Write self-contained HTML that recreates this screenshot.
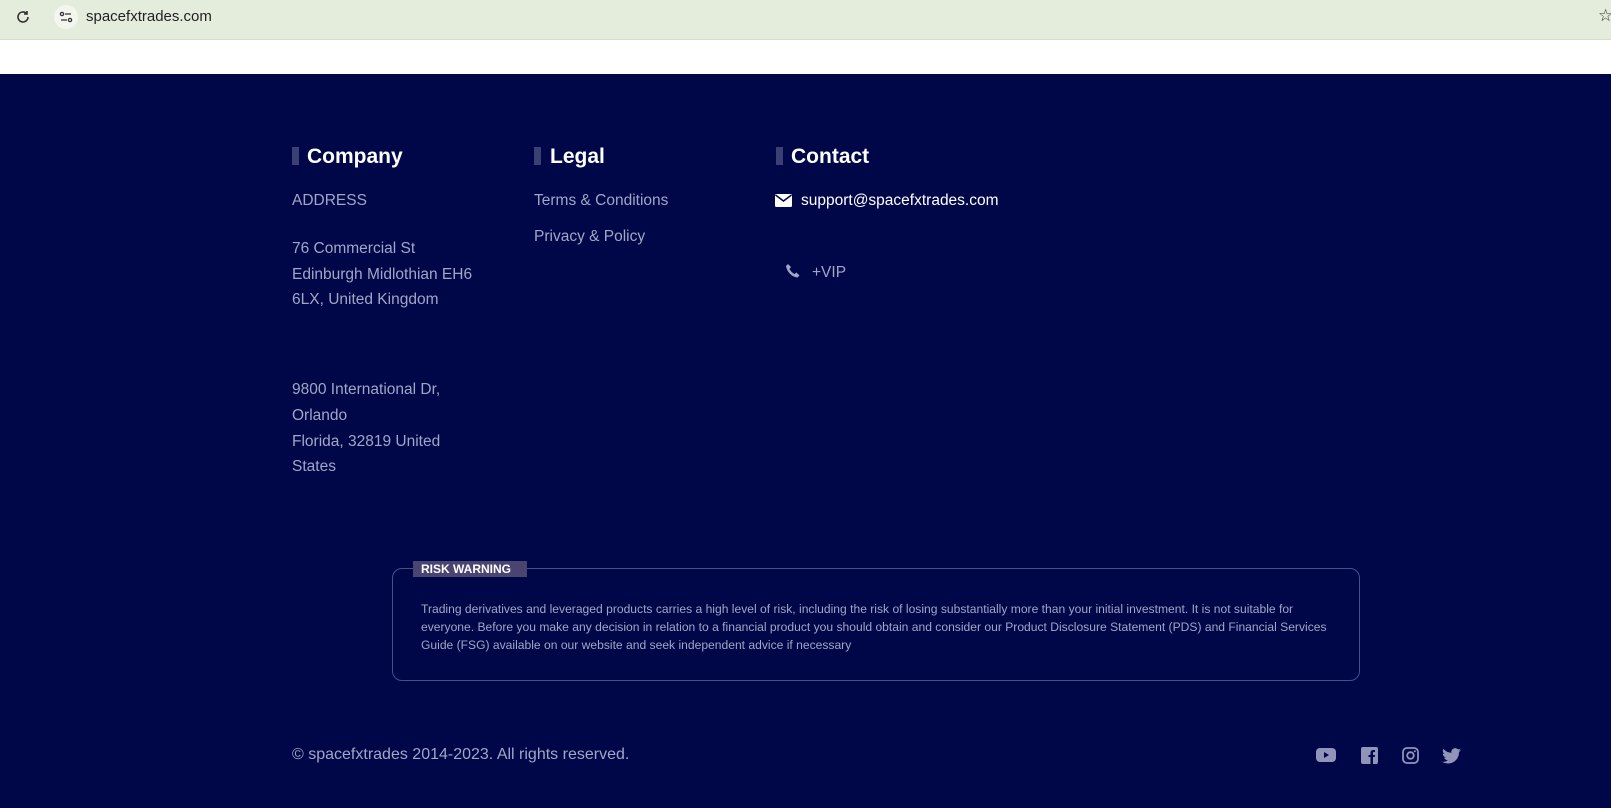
<!DOCTYPE html>
<html><head><meta charset="utf-8"><style>
*{margin:0;padding:0;box-sizing:border-box}
body{width:1611px;height:808px;overflow:hidden;background:#000748;font-family:"Liberation Sans",sans-serif;position:relative}
.top{position:absolute;left:0;top:0;width:1611px;height:40px;background:#e4eddb;border-bottom:1px solid #d5dccd}
.url{position:absolute;left:50px;top:0;height:34px;width:1561px;background:#e4eddb;border-radius:17px 0 0 17px}
.page{position:absolute;left:0;top:40px;width:1611px;height:34px;background:#fff}
.a{position:absolute;white-space:nowrap}
.h{font-weight:bold;color:#fff;font-size:21px;top:145px}
.bar{position:absolute;top:147px;width:7px;height:18px;background:#3b3f74}
.t{color:#a2a5c6;font-size:15.5px}
</style></head><body>
<div class="top"><div class="url"></div>
<svg class="a" style="left:15px;top:9px" width="16" height="16" viewBox="0 0 16 16"><path d="M13 8a5 5 0 1 1-1.5-3.6M12 2v3h-3" fill="none" stroke="#333" stroke-width="1.6"/></svg>
<div class="a" style="left:54px;top:5px;width:24px;height:24px;border-radius:12px;background:#f3f6ef"></div>
<svg class="a" style="left:59px;top:10px" width="14" height="14" viewBox="0 0 14 14"><circle cx="3" cy="4" r="1.6" fill="none" stroke="#333" stroke-width="1.3"/><path d="M6 4h6M2 10h6" stroke="#333" stroke-width="1.3"/><circle cx="11" cy="10" r="1.6" fill="none" stroke="#333" stroke-width="1.3"/></svg>
<div class="a" style="left:86px;top:8px;font-size:15px;color:#222">spacefxtrades.com</div>
<div class="a" style="left:1598px;top:6px;font-size:17px;color:#333">☆</div>
</div>
<div class="page"></div>

<div class="bar" style="left:292px"></div><div class="a h" style="left:307px">Company</div>
<div class="bar" style="left:534px"></div><div class="a h" style="left:550px">Legal</div>
<div class="bar" style="left:776px"></div><div class="a h" style="left:791px">Contact</div>

<div class="a t" style="left:292px;top:192px">ADDRESS</div>
<div class="a t" style="left:292px;top:236px;line-height:25.7px">76 Commercial St<br>Edinburgh Midlothian EH6<br>6LX, United Kingdom</div>
<div class="a t" style="left:292px;top:377px;line-height:25.8px">9800 International Dr,<br>Orlando<br>Florida, 32819 United<br>States</div>

<div class="a t" style="left:534px;top:192px">Terms &amp; Conditions</div>
<div class="a t" style="left:534px;top:228px">Privacy &amp; Policy</div>

<svg class="a" style="left:775px;top:194px" width="17" height="13" viewBox="0 0 17 13"><rect x="0" y="0" width="17" height="13" rx="1.5" fill="#fff"/><path d="M0.5 1l8 6 8-6" fill="none" stroke="#000748" stroke-width="1.5"/></svg>
<div class="a" style="left:801px;top:192px;font-size:15.5px;color:#fff">support@spacefxtrades.com</div>
<svg class="a" style="left:785px;top:263px" width="16" height="16" viewBox="0 0 16 16"><path d="M3 1l3 3-1.5 2c1 2 3 4 5 5l2-1.5 3 3-2 2C7 14 2 9 1 3z" fill="#a2a5c6"/></svg>
<div class="a t" style="left:812px;top:264px">+VIP</div>

<div class="a" style="left:392px;top:568px;width:968px;height:113px;border:1px solid #4a4f86;border-radius:10px"></div>
<div class="a" style="left:413px;top:561px;width:114px;height:16px;background:#4a4470"></div>
<div class="a" style="left:421px;top:562px;font-size:12px;font-weight:bold;color:#fff">RISK WARNING</div>
<div class="a" style="left:421px;top:600px;font-size:12.1px;line-height:18px;color:#a2a5c6">Trading derivatives and leveraged products carries a high level of risk, including the risk of losing substantially more than your initial investment. It is not suitable for<br>everyone. Before you make any decision in relation to a financial product you should obtain and consider our Product Disclosure Statement (PDS) and Financial Services<br>Guide (FSG) available on our website and seek independent advice if necessary</div>

<div class="a t" style="left:292px;top:746px;font-size:16px">© spacefxtrades 2014-2023. All rights reserved.</div>
<svg class="a" style="left:1316px;top:747px" width="20" height="16" viewBox="0 0 20 16"><rect x="0" y="1" width="20" height="14" rx="4" fill="#9194b8"/><path d="M8 5l5 3-5 3z" fill="#000748"/></svg>
<svg class="a" style="left:1361px;top:747px" width="17" height="17" viewBox="0 0 17 17"><rect width="17" height="17" rx="2" fill="#9194b8"/><path d="M9.5 17V10H7.5V8h2V6c0-2 1-3 3-3h1.5v2H13c-.8 0-1 .4-1 1v2h2l-.3 2H12v7z" fill="#000748"/></svg>
<svg class="a" style="left:1402px;top:747px" width="17" height="17" viewBox="0 0 17 17"><rect x="1" y="1" width="15" height="15" rx="4" fill="none" stroke="#9194b8" stroke-width="1.8"/><circle cx="8.5" cy="8.5" r="3.3" fill="none" stroke="#9194b8" stroke-width="1.8"/><circle cx="12.8" cy="4.2" r="1" fill="#9194b8"/></svg>
<svg class="a" style="left:1442px;top:748px" width="19" height="16" viewBox="0 0 24 20"><path d="M24 2.4c-.9.4-1.8.6-2.8.8 1-.6 1.8-1.6 2.2-2.7-1 .6-2 1-3.1 1.2A4.9 4.9 0 0 0 11.9 6C7.8 5.8 4.2 3.9 1.7.9c-1.3 2.3-.6 5.1 1.5 6.6-.8 0-1.6-.2-2.2-.6 0 2.4 1.700 4.400 3.900 4.900-.7.2-1.500.2-2.200.1.6 2 2.500 3.400 4.600 3.400A9.900 9.900 0 0 1 0 17.300 14 14 0 0 0 7.500 19.500c9.100 0 14.300-7.700 14-14.600 1-.7 1.800-1.500 2.500-2.500z" fill="#9194b8"/></svg>
</body></html>
